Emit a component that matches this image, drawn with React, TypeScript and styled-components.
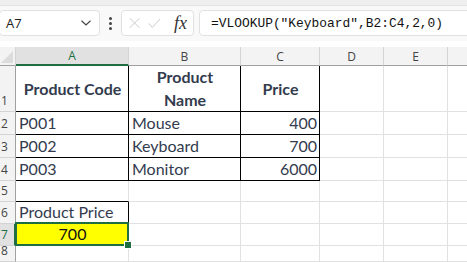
import React, { FC } from 'react'
import styled, { createGlobalStyle, css } from 'styled-components'

const COLUMNS = ['A', 'B', 'C', 'D', 'E', '']
const ROW_HEIGHTS = [46, 23, 23, 23, 21, 22, 22, 16]

type CellData = {
  text?: string
  bold?: boolean
  align?: 'left' | 'center' | 'right'
  middle?: boolean
  right?: boolean
  bottom?: boolean
  fill?: string
  selected?: boolean
  dark?: boolean
}

const SHEET: CellData[][] = [
  [
    { text: 'Product Code', bold: true, align: 'center', middle: true, right: true, bottom: true },
    { text: 'Product Name', bold: true, align: 'center', middle: true, right: true, bottom: true },
    { text: 'Price', bold: true, align: 'center', middle: true, right: true, bottom: true },
  ],
  [
    { text: 'P001', right: true, bottom: true },
    { text: 'Mouse', right: true, bottom: true },
    { text: '400', align: 'right', right: true, bottom: true },
  ],
  [
    { text: 'P002', right: true, bottom: true },
    { text: 'Keyboard', right: true, bottom: true },
    { text: '700', align: 'right', right: true, bottom: true },
  ],
  [
    { text: 'P003', right: true, bottom: true },
    { text: 'Monitor', right: true, bottom: true },
    { text: '6000', align: 'right', right: true, bottom: true },
  ],
  [{ bottom: true }],
  [{ text: 'Product Price', right: true }],
  [{ text: '700', align: 'center', fill: '#ffff00', selected: true, dark: true }],
  [],
]

const GlobalStyle = createGlobalStyle`
  html, body {
    margin: 0;
    padding: 0;
    background: #ffffff;
    overflow: hidden;
  }
`

const App: FC = () => {
  return (
    <>
      <GlobalStyle />
      <Page>
        <FormulaBar>
          <NameBox>
            <span>A7</span>
            <svg width="12" height="8" viewBox="0 0 12 8">
              <path d="M1.5 1.8 L6 6 L10.5 1.8" fill="none" stroke="#444" strokeWidth="1.2" />
            </svg>
          </NameBox>
          <Dots>
            <i />
            <i />
            <i />
          </Dots>
          <FxBox>
            <svg width="14" height="14" viewBox="0 0 14 14">
              <path d="M1 1 L13 13 M13 1 L1 13" stroke="#c4c4c4" strokeWidth="1.1" fill="none" />
            </svg>
            <svg width="16" height="14" viewBox="0 0 16 14">
              <path d="M1 7.5 L5.5 12.5 L15 2" stroke="#c4c4c4" strokeWidth="1.1" fill="none" />
            </svg>
            <FxLabel>fx</FxLabel>
          </FxBox>
          <FormulaInput>=VLOOKUP("Keyboard",B2:C4,2,0)</FormulaInput>
        </FormulaBar>
        <Sheet>
          <Corner>
            <svg width="12" height="12" viewBox="0 0 12 12">
              <path d="M12 0 L12 12 L0 12 Z" fill="#dcdcdc" />
            </svg>
          </Corner>
          {COLUMNS.map((col, i) => (
            <ColHeader key={col + i} $active={i === 0}>
              {col}
            </ColHeader>
          ))}
          {ROW_HEIGHTS.map((h, r) => (
            <React.Fragment key={r}>
              <RowHeader $height={h} $active={r === 6}>
                {r + 1}
              </RowHeader>
              {COLUMNS.map((_, c) => {
                const cell = SHEET[r][c] || {}
                return (
                  <Cell
                    key={c}
                    $height={h}
                    $bold={cell.bold}
                    $align={cell.align || 'left'}
                    $middle={cell.middle}
                    $right={cell.right}
                    $bottom={cell.bottom}
                    $fill={cell.fill}
                    $selected={cell.selected}
                    $dark={cell.dark}
                  >
                    {cell.text === 'Product Name' ? (
                      <span>
                        Product
                        <br />
                        Name
                      </span>
                    ) : (
                      cell.text
                    )}
                  </Cell>
                )
              })}
            </React.Fragment>
          ))}
        </Sheet>
      </Page>
    </>
  )
}

export default App

const Page = styled.div`
  width: 467px;
  height: 262px;
  overflow: hidden;
  background: #ffffff;
`

const FormulaBar = styled.div`
  height: 41px;
  display: flex;
  align-items: flex-start;
  padding-top: 14px;
  box-sizing: border-box;
  background: #f9f9f9;
  border-top: 5px solid #efefef;
  box-shadow: inset 0 1px 0 #e2e2e2;
  margin-bottom: 6px;
`

const boxStyle = css`
  height: 26px;
  box-sizing: border-box;
  background: #ffffff;
  border: 1px solid #e1e1e1;
  border-radius: 4px;
  display: flex;
  align-items: center;
`

const NameBox = styled.div`
  ${boxStyle};
  width: 101px;
  margin-left: -1px;
  margin-top: -9px;
  padding: 0 7px 0 6px;
  justify-content: space-between;
  font-family: 'Open Sans', 'Noto Sans', sans-serif;
  font-size: 13px;
  color: #222;
`

const Dots = styled.div`
  width: 21px;
  margin-top: -9px;
  height: 26px;
  display: flex;
  flex-direction: column;
  align-items: center;
  justify-content: center;
  gap: 2px;

  i {
    width: 3px;
    height: 3px;
    border-radius: 50%;
    background: #444;
  }
`

const FxBox = styled.div`
  ${boxStyle};
  width: 73px;
  margin-top: -9px;
  padding: 0 6px 0 7px;
  gap: 8px;
`

const FxLabel = styled.span`
  font-family: 'Liberation Serif', 'DejaVu Serif', serif;
  font-style: italic;
  font-size: 18px;
  color: #333;
  margin-left: 5px;
  line-height: 1;
`

const FormulaInput = styled.div`
  ${boxStyle};
  flex: 1;
  margin-top: -9px;
  margin-left: 5px;
  margin-right: -6px;
  padding-left: 11px;
  font-family: 'Liberation Mono', 'DejaVu Sans Mono', monospace;
  font-size: 12.9px;
  color: #111;
  white-space: nowrap;
`

const Sheet = styled.div`
  display: grid;
  grid-template-columns: 16px 113px 112px 79px 64px 64px 40px;
  font-family: Lato, 'Liberation Sans', sans-serif;
`

const Corner = styled.div`
  height: 19px;
  box-sizing: border-box;
  background: #f3f3f3;
  border-right: 1px solid #d4d4d4;
  border-bottom: 1px solid #a0a0a0;
  display: flex;
  align-items: flex-end;
  justify-content: flex-end;
  padding: 0 2px 2px 0;
`

const ColHeader = styled.div<{ $active?: boolean }>`
  height: 19px;
  box-sizing: border-box;
  background: ${(p) => (p.$active ? '#e1e1e1' : '#f3f3f3')};
  border-right: 1px solid #d4d4d4;
  border-bottom: ${(p) => (p.$active ? '2px solid #1e6e41' : '1px solid #a0a0a0')};
  display: flex;
  align-items: center;
  justify-content: center;
  font-family: 'Open Sans', 'Noto Sans', sans-serif;
  font-size: 12px;
  color: ${(p) => (p.$active ? '#1e6e41' : '#444')};
`

const RowHeader = styled.div<{ $height: number; $active?: boolean }>`
  height: ${(p) => p.$height}px;
  box-sizing: border-box;
  background: ${(p) => (p.$active ? '#e1e1e1' : '#f3f3f3')};
  border-right: ${(p) => (p.$active ? '2px solid #1e6e41' : '1px solid #a0a0a0')};
  border-bottom: 1px solid #d4d4d4;
  display: flex;
  align-items: flex-end;
  padding: 0 0 2px 1px;
  font-family: 'Open Sans', 'Noto Sans', sans-serif;
  font-size: 12px;
  line-height: 16px;
  color: ${(p) => (p.$active ? '#1e6e41' : '#444')};
`

const Cell = styled.div<{
  $height: number
  $bold?: boolean
  $align: 'left' | 'center' | 'right'
  $middle?: boolean
  $right?: boolean
  $bottom?: boolean
  $fill?: string
  $selected?: boolean
  $dark?: boolean
}>`
  position: relative;
  height: ${(p) => p.$height}px;
  box-sizing: border-box;
  background: ${(p) => p.$fill || '#ffffff'};
  border-right: 1px solid ${(p) => (p.$right ? '#000' : '#e1e1e1')};
  border-bottom: 1px solid ${(p) => (p.$bottom ? '#000' : '#e1e1e1')};
  display: flex;
  align-items: ${(p) => (p.$middle ? 'center' : 'flex-end')};
  justify-content: ${(p) =>
    p.$align === 'center' ? 'center' : p.$align === 'right' ? 'flex-end' : 'flex-start'};
  padding: 0 2px 1px 3px;
  font-size: 16px;
  font-weight: ${(p) => (p.$bold ? 700 : 400)};
  line-height: ${(p) => (p.$middle ? '23px' : '20px')};
  text-align: center;
  color: ${(p) => (p.$dark ? '#111' : '#333c4e')};
  white-space: nowrap;

  ${(p) =>
    p.$selected &&
    css`
      &::after {
        content: '';
        position: absolute;
        left: -1px;
        top: -2px;
        right: -1px;
        bottom: -1px;
        border: 2px solid #1e6e41;
      }

      &::before {
        content: '';
        position: absolute;
        right: -4px;
        bottom: -4px;
        width: 6px;
        height: 6px;
        background: #1e6e41;
        border: 1px solid #fff;
        z-index: 2;
      }
    `}
`
